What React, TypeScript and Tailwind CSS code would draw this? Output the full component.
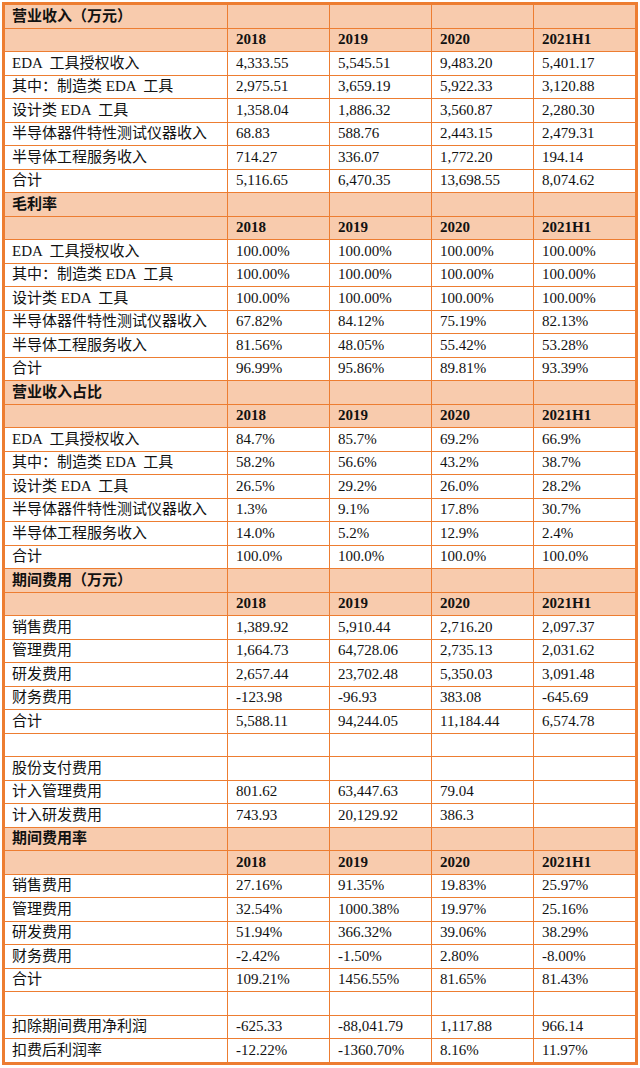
import React from 'react'

type Row =
  | { kind: 'title'; label: string }
  | { kind: 'head' }
  | { kind: 'data'; label: string; values: string[] }
  | { kind: 'blank' }

const years = ['2018', '2019', '2020', '2021H1']

const rows: Row[] = [
  { kind: 'title', label: '营业收入（万元）' },
  { kind: 'head' },
  { kind: 'data', label: 'EDA  工具授权收入', values: ['4,333.55', '5,545.51', '9,483.20', '5,401.17'] },
  { kind: 'data', label: '其中：制造类 EDA  工具', values: ['2,975.51', '3,659.19', '5,922.33', '3,120.88'] },
  { kind: 'data', label: '设计类 EDA  工具', values: ['1,358.04', '1,886.32', '3,560.87', '2,280.30'] },
  { kind: 'data', label: '半导体器件特性测试仪器收入', values: ['68.83', '588.76', '2,443.15', '2,479.31'] },
  { kind: 'data', label: '半导体工程服务收入', values: ['714.27', '336.07', '1,772.20', '194.14'] },
  { kind: 'data', label: '合计', values: ['5,116.65', '6,470.35', '13,698.55', '8,074.62'] },

  { kind: 'title', label: '毛利率' },
  { kind: 'head' },
  { kind: 'data', label: 'EDA  工具授权收入', values: ['100.00%', '100.00%', '100.00%', '100.00%'] },
  { kind: 'data', label: '其中：制造类 EDA  工具', values: ['100.00%', '100.00%', '100.00%', '100.00%'] },
  { kind: 'data', label: '设计类 EDA  工具', values: ['100.00%', '100.00%', '100.00%', '100.00%'] },
  { kind: 'data', label: '半导体器件特性测试仪器收入', values: ['67.82%', '84.12%', '75.19%', '82.13%'] },
  { kind: 'data', label: '半导体工程服务收入', values: ['81.56%', '48.05%', '55.42%', '53.28%'] },
  { kind: 'data', label: '合计', values: ['96.99%', '95.86%', '89.81%', '93.39%'] },

  { kind: 'title', label: '营业收入占比' },
  { kind: 'head' },
  { kind: 'data', label: 'EDA  工具授权收入', values: ['84.7%', '85.7%', '69.2%', '66.9%'] },
  { kind: 'data', label: '其中：制造类 EDA  工具', values: ['58.2%', '56.6%', '43.2%', '38.7%'] },
  { kind: 'data', label: '设计类 EDA  工具', values: ['26.5%', '29.2%', '26.0%', '28.2%'] },
  { kind: 'data', label: '半导体器件特性测试仪器收入', values: ['1.3%', '9.1%', '17.8%', '30.7%'] },
  { kind: 'data', label: '半导体工程服务收入', values: ['14.0%', '5.2%', '12.9%', '2.4%'] },
  { kind: 'data', label: '合计', values: ['100.0%', '100.0%', '100.0%', '100.0%'] },

  { kind: 'title', label: '期间费用（万元）' },
  { kind: 'head' },
  { kind: 'data', label: '销售费用', values: ['1,389.92', '5,910.44', '2,716.20', '2,097.37'] },
  { kind: 'data', label: '管理费用', values: ['1,664.73', '64,728.06', '2,735.13', '2,031.62'] },
  { kind: 'data', label: '研发费用', values: ['2,657.44', '23,702.48', '5,350.03', '3,091.48'] },
  { kind: 'data', label: '财务费用', values: ['-123.98', '-96.93', '383.08', '-645.69'] },
  { kind: 'data', label: '合计', values: ['5,588.11', '94,244.05', '11,184.44', '6,574.78'] },
  { kind: 'blank' },
  { kind: 'data', label: '股份支付费用', values: ['', '', '', ''] },
  { kind: 'data', label: '计入管理费用', values: ['801.62', '63,447.63', '79.04', ''] },
  { kind: 'data', label: '计入研发费用', values: ['743.93', '20,129.92', '386.3', ''] },

  { kind: 'title', label: '期间费用率' },
  { kind: 'head' },
  { kind: 'data', label: '销售费用', values: ['27.16%', '91.35%', '19.83%', '25.97%'] },
  { kind: 'data', label: '管理费用', values: ['32.54%', '1000.38%', '19.97%', '25.16%'] },
  { kind: 'data', label: '研发费用', values: ['51.94%', '366.32%', '39.06%', '38.29%'] },
  { kind: 'data', label: '财务费用', values: ['-2.42%', '-1.50%', '2.80%', '-8.00%'] },
  { kind: 'data', label: '合计', values: ['109.21%', '1456.55%', '81.65%', '81.43%'] },
  { kind: 'blank' },
  { kind: 'data', label: '扣除期间费用净利润', values: ['-625.33', '-88,041.79', '1,117.88', '966.14'] },
  { kind: 'data', label: '扣费后利润率', values: ['-12.22%', '-1360.70%', '8.16%', '11.97%'] },
]

const cell = 'flex items-center whitespace-pre overflow-hidden'
const first = 'pl-[7px]'
const rest = 'pl-2'

function renderRow(row: Row, i: number) {
  if (row.kind === 'title') {
    return (
      <React.Fragment key={i}>
        <div className={`${cell} ${first} bg-[#f8cbad] font-bold text-[15px]`}>{row.label}</div>
        {years.map((y) => (
          <div key={y} className="bg-[#f8cbad]" />
        ))}
      </React.Fragment>
    )
  }
  if (row.kind === 'head') {
    return (
      <React.Fragment key={i}>
        <div className="bg-[#f8cbad]" />
        {years.map((y) => (
          <div key={y} className={`${cell} ${rest} bg-[#f8cbad] font-bold`}>
            {y}
          </div>
        ))}
      </React.Fragment>
    )
  }
  if (row.kind === 'blank') {
    return (
      <React.Fragment key={i}>
        <div className="bg-white" />
        {years.map((y) => (
          <div key={y} className="bg-white" />
        ))}
      </React.Fragment>
    )
  }
  return (
    <React.Fragment key={i}>
      <div className={`${cell} ${first} bg-white`}>{row.label}</div>
      {row.values.map((v, j) => (
        <div key={j} className={`${cell} ${rest} bg-white`}>
          {v}
        </div>
      ))}
    </React.Fragment>
  )
}

export default function App() {
  return (
    <div className="bg-white w-[640px] min-h-[1068px] p-[2px]">
      <div
        className="grid grid-cols-[222px_101px_101px_101px_101px] auto-rows-[22.5px] gap-px bg-[#ed7d31] border-[3px] border-[#ed7d31] w-[636px] text-[15px] leading-none text-[#111]"
        style={{ fontFamily: '"Liberation Serif", "Noto Sans CJK SC", serif' }}
      >
        {rows.map(renderRow)}
      </div>
    </div>
  )
}
